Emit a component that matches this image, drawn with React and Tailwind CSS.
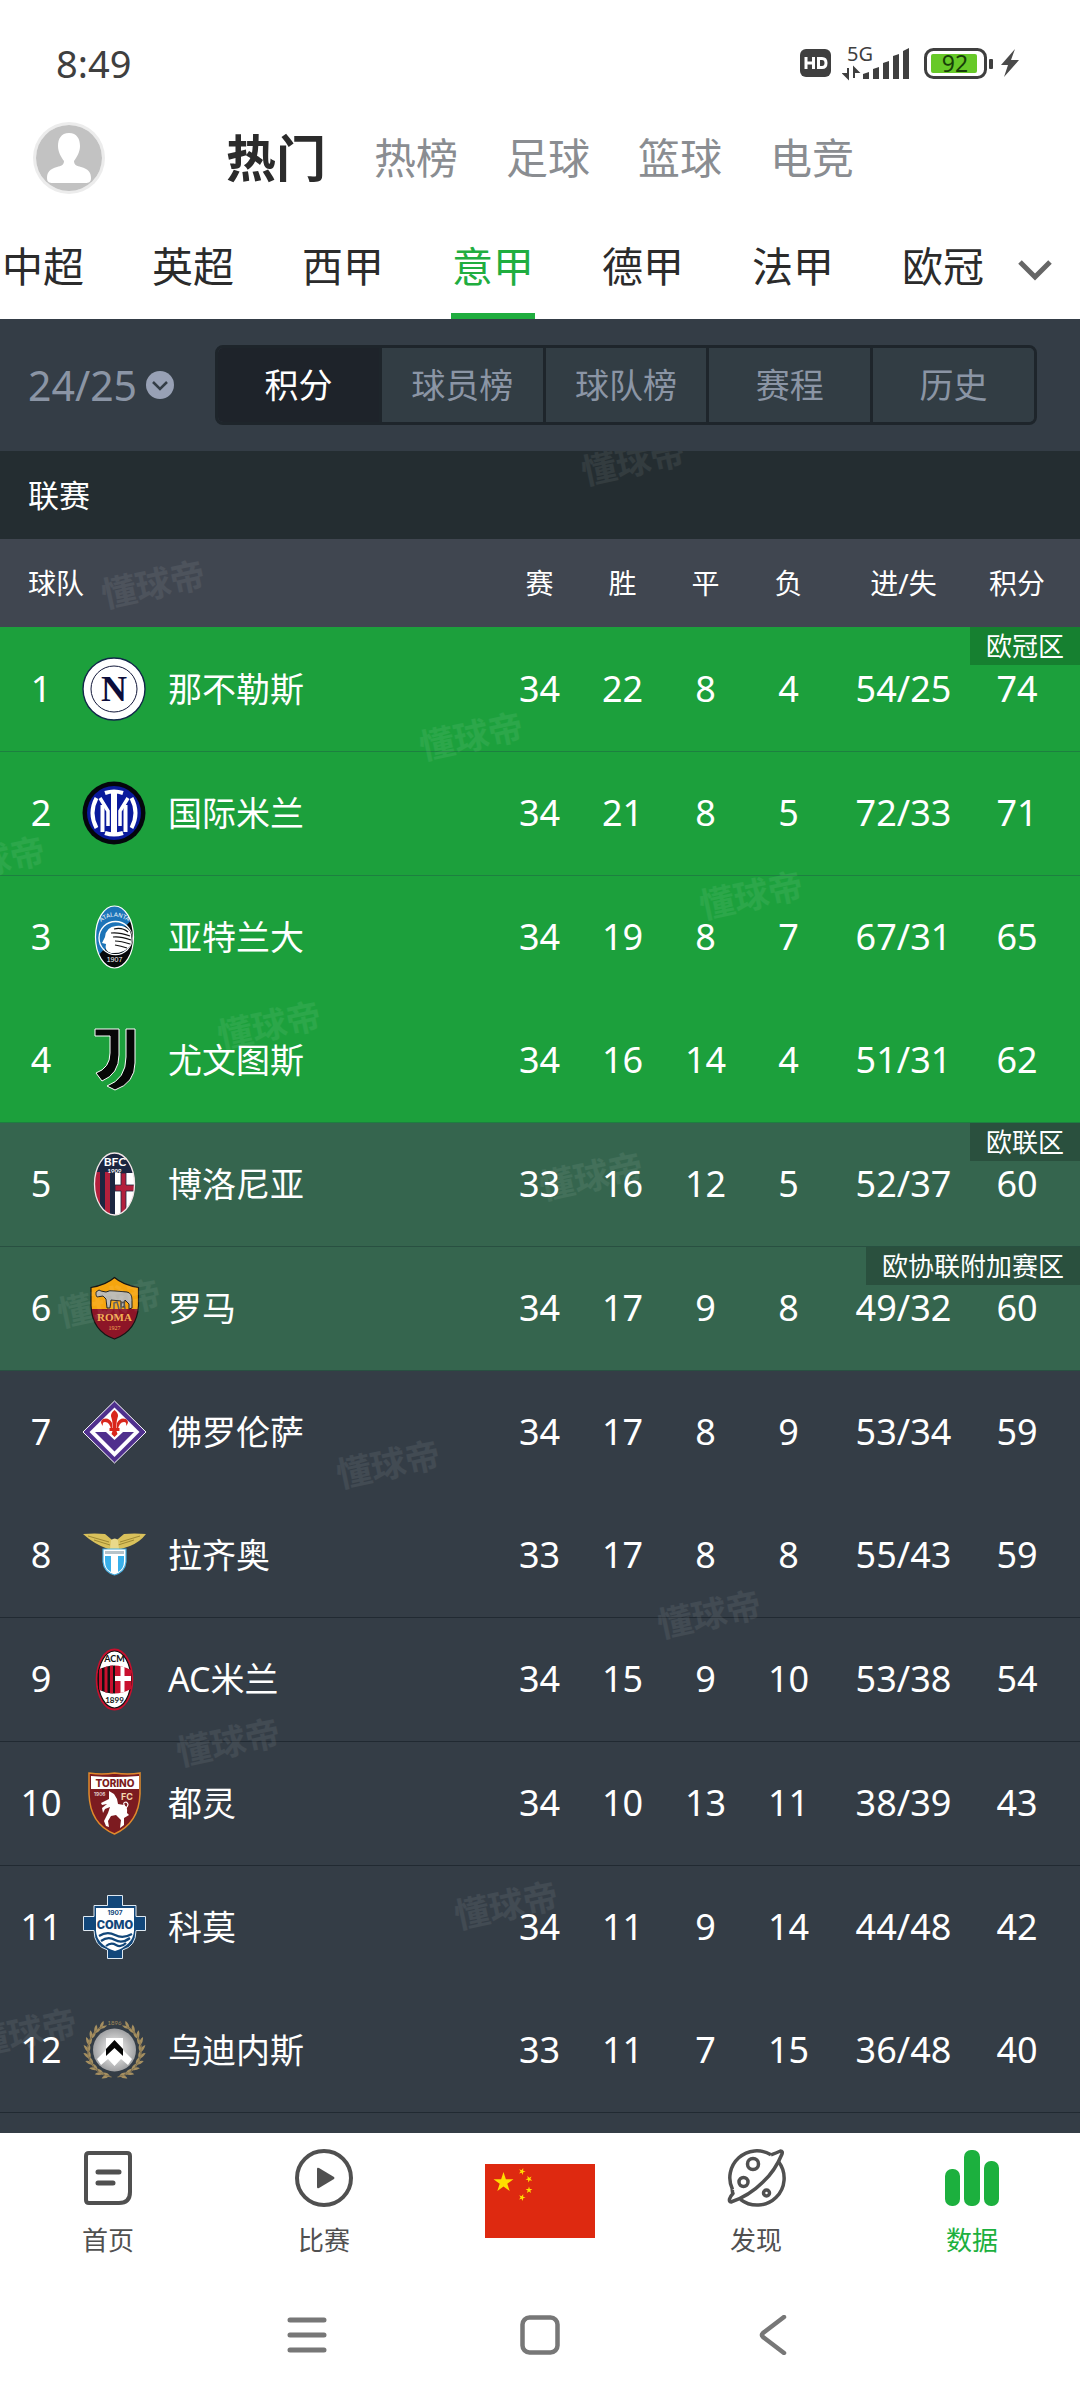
import { useState } from 'react'
import clsx from 'clsx'

const channels = ['热门', '热榜', '足球', '篮球', '电竞']
const leagues = ['中超', '英超', '西甲', '意甲', '德甲', '法甲', '欧冠']
const views = ['积分', '球员榜', '球队榜', '赛程', '历史']

const teams = [
  { name: '那不勒斯', crest: Napoli, zone: 'ucl', badge: '欧冠区', line: true, stats: [34, 22, 8, 4, '54/25', 74] },
  { name: '国际米兰', crest: Inter, zone: 'ucl', line: true, stats: [34, 21, 8, 5, '72/33', 71] },
  { name: '亚特兰大', crest: Atalanta, zone: 'ucl', stats: [34, 19, 8, 7, '67/31', 65] },
  { name: '尤文图斯', crest: Juventus, zone: 'ucl', line: true, stats: [34, 16, 14, 4, '51/31', 62] },
  { name: '博洛尼亚', crest: Bologna, zone: 'uel', badge: '欧联区', line: true, stats: [33, 16, 12, 5, '52/37', 60] },
  { name: '罗马', crest: Roma, zone: 'uel', badge: '欧协联附加赛区', line: true, stats: [34, 17, 9, 8, '49/32', 60] },
  { name: '佛罗伦萨', crest: Fiorentina, stats: [34, 17, 8, 9, '53/34', 59] },
  { name: '拉齐奥', crest: Lazio, line: true, stats: [33, 17, 8, 8, '55/43', 59] },
  { name: 'AC米兰', crest: Milan, line: true, stats: [34, 15, 9, 10, '53/38', 54] },
  { name: '都灵', crest: Torino, line: true, stats: [34, 10, 13, 11, '38/39', 43] },
  { name: '科莫', crest: Como, stats: [34, 11, 9, 14, '44/48', 42] },
  { name: '乌迪内斯', crest: Udinese, line: true, stats: [33, 11, 7, 15, '36/48', 40] },
]

// centre points, measured from the top left of the standings
const watermarks = [
  [633, 10], [153, 133], [471, 285], [-7, 409], [751, 444], [269, 574], [591, 725],
  [109, 852], [388, 1013], [709, 1163], [228, 1291], [506, 1454], [25, 1581],
]

function Crest({ children }) {
  return (
    <svg viewBox="0 0 64 64" className="block size-16" aria-hidden="true">
      {children}
    </svg>
  )
}

function Napoli() {
  return (
    <Crest>
      <circle cx="32" cy="32" r="31" fill="#fff" stroke="#12284a" strokeWidth="1.4" />
      <circle cx="32" cy="32" r="23" fill="none" stroke="#12183a" strokeWidth="1" />
      <text x="32" y="44" fontSize="36" fontWeight="700" textAnchor="middle" fill="#0c0d3a" fontFamily="Liberation Serif, serif">N</text>
    </Crest>
  )
}

function Inter() {
  return (
    <Crest>
      <circle cx="32" cy="32" r="31.5" fill="#04060c" />
      <circle cx="32" cy="32" r="27" fill="#0a1a9c" />
      <g fill="none" stroke="#fff">
        <path d="M23 12q9-3 18 0M23 52q9 3 18 0" strokeWidth="4" />
        <path d="M32 11v42" strokeWidth="6" />
        <path d="M14.5 17q-8 15 0 30M49.5 17q8 15 0 30" strokeWidth="4" />
        <path d="M18 17l8 13v15M46 17l-8 13v15" strokeWidth="3.5" />
        <path d="M20.5 24v27M43.5 24v27" strokeWidth="4" />
      </g>
    </Crest>
  )
}

function Atalanta() {
  return (
    <Crest>
      <clipPath id="ata"><ellipse cx="32.5" cy="32" rx="19" ry="31" /></clipPath>
      <g clipPath="url(#ata)">
        <rect width="64" height="64" fill="#1c74b8" />
        <path d="M54 10L12 55v9h44z" fill="#07080a" />
      </g>
      <circle cx="33.5" cy="33" r="16.5" fill="#1c74b8" stroke="#fff" strokeWidth="1.3" />
      <path d="M50 32a16.5 16.5 0 0 1-27 13l20-24q7 4 7 11z" fill="#07080a" />
      <path d="M29 48q-7-2-5-9l-4-1 3-6q1-10 11-11 9-1 14 5 3 8 0 15-6 8-19 7z" fill="#fff" />
      <path d="M32 24q8-2 14 3M29 28q8-1 19 3M31 32q7-1 18 3M33 36q6 0 15 3M33 40q6 1 12 3" fill="none" stroke="#111" strokeWidth="1.2" />
      <ellipse cx="32.5" cy="32" rx="19" ry="31" fill="none" stroke="#fff" strokeWidth="1.2" />
      <path id="ataArc" d="M19 17Q32 6 47 17" fill="none" />
      <text fontSize="6" fill="#fff" fontFamily="Liberation Sans, sans-serif"><textPath href="#ataArc">ATALANTA</textPath></text>
      <text x="32.5" y="57" fontSize="7" textAnchor="middle" fill="#fff" fontFamily="Liberation Sans, sans-serif">1907</text>
    </Crest>
  )
}

function Juventus() {
  return (
    <Crest>
      <g fill="#060606" stroke="#fff" strokeWidth="1">
        <path d="M13 1h24v26q0 19-17 26l-6-8q14-5 14-20V8H13z" />
        <path d="M44 1h9v34q0 20-20 27l-8-4q19-7 19-29z" />
      </g>
    </Crest>
  )
}

function Bologna() {
  return (
    <Crest>
      <clipPath id="bol"><ellipse cx="32.5" cy="32" rx="20" ry="31" /></clipPath>
      <g clipPath="url(#bol)">
        <rect width="64" height="64" fill="#1b2640" />
        <path d="M12 20h6v44h-6zM23 20h5v44h-5z" fill="#b3203c" />
        <path d="M33 21h20v43H33z" fill="#fff" />
        <path d="M39 21h5v12h10v6H44v25h-5V39h-6v-6h6z" fill="#b3203c" stroke="#1b2640" strokeWidth="0.8" />
      </g>
      <ellipse cx="32.5" cy="32" rx="20" ry="31" fill="none" stroke="#f3e6e8" strokeWidth="1.3" />
      <text x="33" y="14" fontSize="12" fontWeight="700" textAnchor="middle" fill="#fff" fontFamily="Lato, sans-serif">BFC</text>
      <text x="32.5" y="20.5" fontSize="6" fontWeight="700" textAnchor="middle" fill="#fff" fontFamily="Lato, sans-serif">1909</text>
    </Crest>
  )
}

function Roma() {
  const shield = 'M32.5 1.5Q24 9 9 11.5v18q1 26 23.5 33.5Q55 55 56.5 29.5v-18Q41 9 32.5 1.5z'
  return (
    <Crest>
      <clipPath id="rom"><path d={shield} /></clipPath>
      <g clipPath="url(#rom)">
        <rect width="64" height="33" fill="#f6a50e" />
        <rect y="33" width="64" height="31" fill="#8d1527" />
      </g>
      <path d={shield} fill="none" stroke="#151515" strokeWidth="1.2" />
      <path d="M14 16l3-2 2 1 5 1q3-2 9-1l12 1q5 1 5 8v8l-3 1v-5l-4-4-1 7h-3v-6l-10-1-1 8h-3l-1-9-3-3-6 1-1-2z" fill="#b9b7b2" stroke="#222" strokeWidth="1" />
      <path d="M32 33v-6l3-1 2 7M39 33v-6l3-1 1 7" fill="none" stroke="#555" strokeWidth="1.5" />
      <text x="32.5" y="45" fontSize="11" fontWeight="700" textAnchor="middle" fill="#f3b053" fontFamily="Liberation Serif, serif">ROMA</text>
      <text x="32.5" y="54" fontSize="6" textAnchor="middle" fill="#f3b053" fontFamily="Liberation Serif, serif">1927</text>
    </Crest>
  )
}

function Fiorentina() {
  return (
    <Crest>
      <path d="M32.5 1L64 32 32.5 63 1 32z" fill="#4f2f8d" stroke="#fff" strokeWidth="1" />
      <path d="M32.5 7.5L57.5 32 32.5 57 7.5 32z" fill="#fff" />
      <path d="M13 32h11l8.5 8 8.5-8h11L32.5 51.5z" fill="#4f2f8d" />
      <g fill="#d9261c">
        <path d="M32.5 10q5 4 3 8-1 3-1 6v4h3v3h-3l1 3-3 3-3-3 1-3h-3v-3h3v-4q0-3-1-6-2-4 3-8z" />
        <path d="M29 30q-1-8-6-8-3 0-2 4-4-4 0-7 6-2 9 4v7zM36 30q1-8 6-8 3 0 2 4 4-4 0-7-6-2-9 4v7z" />
      </g>
    </Crest>
  )
}

function Lazio() {
  return (
    <Crest>
      <path d="M1 11q12-1 22 0l6 5 3 3 4-3 6-5q10-1 22 0-6 8-16 12l-9 3H26q-14-5-25-15z" fill="#d9c15b" />
      <path d="M6 13l21 6M12 17l16 5M58 13l-20 6M52 17l-16 5" stroke="#8e7a28" strokeWidth="0.8" />
      <path d="M29 17q4-3 7 0l1 9h-9z" fill="#e9d98a" />
      <path d="M21 26h23v13q-1 10-11.5 13Q22 49 21 39z" fill="#fff" stroke="#46aee0" strokeWidth="1.2" />
      <path d="M23 33h6v16q-6-3-6-11zM36 33h6v5q0 8-6 11z" fill="#39b0ea" />
      <rect x="23" y="28" width="19" height="3" fill="#b6c3c9" />
    </Crest>
  )
}

function Milan() {
  return (
    <Crest>
      <ellipse cx="32.5" cy="32.5" rx="18.8" ry="31" fill="#c8102e" />
      <ellipse cx="32.5" cy="32.5" rx="16.5" ry="28.5" fill="#fff" stroke="#111" strokeWidth="1.2" />
      <clipPath id="mil"><path d="M16 23q16-9 33 0v19q-17 9-33 0z" /></clipPath>
      <g clipPath="url(#mil)">
        <rect x="16" y="17" width="17" height="32" fill="#111" />
        <path d="M17 17h3v32h-3zM22.5 17h3v32h-3zM28 17h3v32h-3z" fill="#c8102e" />
        <rect x="33" y="17" width="16" height="32" fill="#c8102e" />
        <path d="M38.5 17h4v12H49v5h-6.5v15h-4V34H33v-5h5.5z" fill="#fff" />
      </g>
      <text x="32.5" y="15" fontSize="9" fontWeight="700" textAnchor="middle" fill="#111" fontFamily="Lato, sans-serif">ACM</text>
      <text x="32.5" y="56" fontSize="8" fontWeight="700" textAnchor="middle" fill="#111" fontFamily="Lato, sans-serif">1899</text>
    </Crest>
  )
}

function Torino() {
  return (
    <Crest>
      <path d="M7 2q13 2 25.5 0Q46 4 58 2v21q-1 29-25.5 40Q8 53 7 23z" fill="#7c1b20" stroke="#e08a2c" strokeWidth="1.5" />
      <path d="M9 5q23 2 48 0v13H9z" fill="#fff" />
      <text x="33" y="15.5" fontSize="10" fontWeight="800" textAnchor="middle" fill="#7c1b20" fontFamily="Inter, sans-serif">TORINO</text>
      <text x="12" y="25" fontSize="5" fill="#fff" fontFamily="Inter, sans-serif">1906</text>
      <text x="39" y="28.5" fontSize="9" fontWeight="700" fill="#f2d9b0" fontFamily="Inter, sans-serif">FC</text>
      <path d="M27 20l5 3 3 5 1 5 6 1q4 2 3 8l2 2-5 3v7l-4 3 1-8-5-5-5 1-3 5 1 6-3-1-2-5 4-8 2-6-5 2-2 4-1-5 5-4-5 1-1-2 8-4z" fill="#fff" />
      <path d="M43 36q-3-5 1-5 4 2 0 6" fill="none" stroke="#fff" strokeWidth="1.2" />
    </Crest>
  )
}

function Como() {
  return (
    <Crest>
      <path d="M25.5.5h15v10H54v11h9.500v14H54q0 16-13.5 19.5v8.500h-15V55Q12 51 12 35.500H1.500v-14H12v-11h13.500z" fill="#12477a" stroke="#dfe9f1" strokeWidth="1" />
      <path d="M14 13h38v23q-1 14-19 20-18-6-19-20z" fill="#fff" />
      <text x="33" y="19.5" fontSize="6.5" fontWeight="700" textAnchor="middle" fill="#12477a" fontFamily="Inter, sans-serif">1907</text>
      <text x="33" y="34" fontSize="12.5" fontWeight="900" textAnchor="middle" fill="#12477a" fontFamily="Roboto, sans-serif">COMO</text>
      <path d="M17 41q8-5 16-1t17-1M19 46q7-5 14-1t15-2M24 51q5-4 10-1t10-2" fill="none" stroke="#12477a" strokeWidth="2.2" />
    </Crest>
  )
}

function Laurel({ side }) {
  const leaves = [28, 43, 58, 73, 88, 103, 118, 133, 148, 163]
  return (
    <g transform={`translate(32.5 32) scale(${side} 1)`}>
      {leaves.map((deg) => (
        <g key={deg} transform={`rotate(${deg})`}>
          <path d="M3-26q-2-4-7-5 1 5 7 5zM3-26q-3 3-8 1 4-3 8-1z" />
        </g>
      ))}
      <path d="M12-24A27 27 0 0 1 3 27" fill="none" stroke="#9a8355" strokeWidth="1" />
    </g>
  )
}

function Udinese() {
  return (
    <Crest>
      <radialGradient id="udi">
        <stop offset="0.4" stopColor="#d9d9d9" />
        <stop offset="1" stopColor="#9fa0a2" />
      </radialGradient>
      <g fill="#a58f60">
        <Laurel side={1} />
        <Laurel side={-1} />
      </g>
      <text x="32.5" y="7" fontSize="6" textAnchor="middle" fill="#a08a5c" fontFamily="Lato, sans-serif">1896</text>
      <circle cx="32.5" cy="32" r="21.5" fill="url(#udi)" />
      <path d="M24 20h17v12l9 9-4 6-7-6-6.5 7-6.5-7-7 6-4-6 9-9z" fill="#fff" />
      <path d="M32.5 22L41 31v7l-8.5-8-8.5 8v-7z" fill="#050505" />
    </Crest>
  )
}

function StatusBar() {
  return (
    <div className="flex h-[116px] items-center justify-between pt-2.5 pr-[60px] pl-14 text-[#3f3f3f]">
      <span className="text-[38px] leading-none">8:49</span>
      <div className="flex items-center">
        <svg viewBox="0 0 32 30" className="h-[30px] w-8" aria-label="HD">
          <rect y="1" width="31" height="28" rx="6" fill="#3f3f3f" />
          <path d="M6 9v12M13.5 9v12M6 15h7.5" stroke="#fff" strokeWidth="3" fill="none" />
          <path d="M18.5 10.5h3.5q4 0 4 4.5t-4 4.5h-3.5z" stroke="#fff" strokeWidth="3" fill="none" />
        </svg>
        <svg viewBox="0 0 70 44" className="ml-2.5 h-11 w-[70px]" aria-hidden="true">
          <text x="5" y="20" fontSize="20" fill="#3f3f3f" fontFamily="Noto Sans, sans-serif">5G</text>
          <path d="M6 27v10l-4-4h4M12 37V27l4 4h-4" fill="#3f3f3f" stroke="#3f3f3f" strokeWidth="2" />
          <path d="M21 33l6-2v7h-6zM31 28l6-2v12h-6zM41 22l6-2v18h-6zM51 15l6-2v25h-6zM61 10l6-3v31h-6z" fill="#3f3f3f" />
        </svg>
        <svg viewBox="0 0 72 34" className="ml-3 h-[34px] w-[72px]" aria-hidden="true">
          <rect x="1.5" y="3.5" width="60" height="28" rx="8" fill="#fff" stroke="#3f3f3f" strokeWidth="3" />
          <rect x="7" y="8" width="46" height="19" rx="2" fill="#67c928" />
          <rect x="65" y="13" width="4" height="10" rx="1" fill="#3f3f3f" />
          <text x="31" y="26" fontSize="23" textAnchor="middle" fill="#173e08" fontFamily="Noto Sans, sans-serif">92</text>
        </svg>
        <svg viewBox="0 0 20 30" className="ml-1 h-[30px] w-5" aria-hidden="true">
          <path d="M15 1L1 17h7L4 29l15-17h-8z" fill="#4a4a4a" />
        </svg>
      </div>
    </div>
  )
}

function ChannelBar() {
  const [active, setActive] = useState('热门')
  return (
    <header className="flex h-[84px] items-center pl-9">
      <button type="button" aria-label="我的" className="rounded-full ring-3 ring-[#ececec]">
        <svg viewBox="0 0 66 66" className="block size-[66px]">
          <circle cx="33" cy="33" r="33" fill="#c2c2c2" />
          <path d="M33 8c8 0 11 6 11 13 0 6-3 11-6 15 0 4 3 5 7 6 7 2 10 5 10 11 0 4-2 5-6 5H17c-4 0-6-1-6-5 0-6 3-9 10-11 4-1 7-2 7-6-3-4-6-9-6-15 0-7 3-13 11-13z" fill="#fff" />
        </svg>
      </button>
      <nav className="ml-[124px] flex items-center gap-12">
        {channels.map((item) => (
          <button
            key={item}
            type="button"
            onClick={() => setActive(item)}
            className={clsx('leading-none', item === active ? 'text-[50px] font-bold text-[#2b2b2b]' : 'text-[42px] text-[#8a8d91]')}
          >
            {item}
          </button>
        ))}
      </nav>
    </header>
  )
}

function LeagueTabs() {
  const [active, setActive] = useState('意甲')
  return (
    <div className="flex h-[119px]">
      <nav className="flex flex-1 justify-end overflow-hidden">
        {leagues.map((item) => (
          <button
            key={item}
            type="button"
            onClick={() => setActive(item)}
            className={clsx(
              'relative flex w-[150px] shrink-0 items-center justify-center pt-3.5 text-[41px] leading-none',
              item === active ? 'text-[#20ad3f]' : 'text-[#2b2b2b]',
            )}
          >
            {item}
            {item === active && <span className="absolute bottom-0 h-1.5 w-[84px] bg-[#20ad3f]" />}
          </button>
        ))}
      </nav>
      <button type="button" aria-label="更多联赛" className="flex w-[62px] items-center pt-5">
        <svg viewBox="0 0 34 22" className="h-[22px] w-[34px]">
          <path d="M2 3l15 15L32 3" fill="none" stroke="#666" strokeWidth="5" />
        </svg>
      </button>
    </div>
  )
}

function FilterBar() {
  const [active, setActive] = useState('积分')
  return (
    <div className="flex h-[132px] items-center bg-[#343d46] pr-[43px]">
      <label className="flex w-[215px] shrink-0 items-center gap-2 pl-7 text-[#8b95a5]">
        <select aria-label="赛季" className="appearance-none bg-transparent text-[41px] leading-none outline-none" defaultValue="24/25">
          <option>24/25</option>
        </select>
        <svg viewBox="0 0 28 28" className="size-7 shrink-0">
          <circle cx="14" cy="14" r="14" fill="#98a1b5" />
          <path d="M7 11l7 7 7-7" fill="none" stroke="#343d46" strokeWidth="2.5" />
        </svg>
      </label>
      <div className="flex h-20 flex-1 divide-x-[3px] divide-[#1e252b] overflow-hidden rounded-lg border-[3px] border-[#1e252b]">
        {views.map((item) => (
          <button
            key={item}
            type="button"
            onClick={() => setActive(item)}
            className={clsx('flex-1 text-[34px] leading-none', item === active ? 'bg-[#1e232a] text-white' : 'bg-[#323d44] text-[#8b95a5]')}
          >
            {item}
          </button>
        ))}
      </div>
    </div>
  )
}

function TeamRow({ rank, team }) {
  const { name, crest: Logo, zone, badge, line, stats } = team
  return (
    <tr
      className={clsx(
        line ? 'h-[124px] border-b' : 'h-[123px]',
        zone === 'ucl' && 'border-[#1c8040] bg-[#1ca03c]',
        zone === 'uel' && 'border-[#285041] bg-[#35654e]',
        !zone && 'border-[#212a32] bg-[#343d46]',
      )}
    >
      <td>{rank}</td>
      <td><Logo /></td>
      <th scope="row" className="pl-[22px] text-left text-[34px] font-normal">{name}</th>
      {stats.map((value, i) => (
        <td key={i} className={clsx(i === 5 && 'relative pr-[23px]')}>
          {value}
          {i === 5 && badge && (
            <span className="absolute top-0 right-0 h-[38px] bg-black/20 px-4 text-[26px] leading-[38px] whitespace-nowrap">{badge}</span>
          )}
        </td>
      ))}
    </tr>
  )
}

function Standings() {
  return (
    <main className="relative overflow-hidden bg-[#343d46] pb-5 text-white">
      <h2 className="flex h-[88px] items-center bg-[#242d31] pl-7 text-[31px] leading-none">联赛</h2>
      <table className="w-full table-fixed border-collapse text-center text-[36px] leading-none">
        <colgroup>
          <col className="w-[82px]" />
          <col className="w-16" />
          <col />
          <col className="w-[83px]" />
          <col className="w-[83px]" />
          <col className="w-[83px]" />
          <col className="w-[83px]" />
          <col className="w-[147px]" />
          <col className="w-[103px]" />
        </colgroup>
        <thead>
          <tr className="h-[88px] bg-[#404650] text-[28px] *:font-normal">
            <th colSpan={3} className="pl-7 text-left">球队</th>
            <th>赛</th>
            <th>胜</th>
            <th>平</th>
            <th>负</th>
            <th>进/失</th>
            <th className="pr-[23px]">积分</th>
          </tr>
        </thead>
        <tbody>
          {teams.map((team, i) => (
            <TeamRow key={team.name} rank={i + 1} team={team} />
          ))}
        </tbody>
      </table>
      <div className="pointer-events-none absolute inset-0" aria-hidden="true">
        {watermarks.map(([x, y]) => (
          <span
            key={y}
            style={{ left: x, top: y }}
            className="absolute -translate-x-1/2 -translate-y-1/2 -rotate-12 text-[35px] leading-none font-bold whitespace-nowrap text-white/7"
          >
            懂球帝
          </span>
        ))}
      </div>
    </main>
  )
}

function HomeIcon() {
  return (
    <svg viewBox="0 0 58 58" className="size-[58px]" fill="none" stroke="#505050" strokeWidth="4" strokeLinecap="round">
      <path d="M10 4h38q3 0 3 3v36q0 11-11 11H10q-3 0-3-3V7q0-3 3-3z" />
      <path d="M19 23h21M19 34h15" strokeWidth="5" />
    </svg>
  )
}

function MatchIcon() {
  return (
    <svg viewBox="0 0 58 58" className="size-[58px]">
      <circle cx="29" cy="29" r="27" fill="none" stroke="#505050" strokeWidth="4" />
      <path d="M22 20q0-2 2-1l15 9q1 1 0 2l-15 9q-2 1-2-1z" fill="#505050" />
    </svg>
  )
}

function DiscoverIcon() {
  return (
    <svg viewBox="0 0 58 58" className="size-[58px] overflow-visible" fill="none" stroke="#505050" strokeWidth="3.5" strokeLinejoin="round">
      <path d="M44 5.800Q49 4 53.500 2q2.500 0 1.500 3Q48 22 36 33 22 47 4 53q-2 0-1.500-3 1-3 3.500-5.500-1-2-.5-4" />
      <path d="M5.500 40.500A27 27 0 0 1 44 5.800" />
      <path d="M51.800 13A27 27 0 0 1 13.400 50.300" />
      <circle cx="26" cy="15" r="5.5" />
      <circle cx="16.500" cy="33" r="4.5" />
      <circle cx="39.5" cy="44" r="3" />
    </svg>
  )
}

function DataIcon() {
  return (
    <svg viewBox="0 0 58 58" className="size-[58px]" fill="#1cb03e">
      <rect x="2" y="20" width="15" height="37" rx="7" />
      <rect x="21" y="1" width="16" height="56" rx="7" />
      <rect x="41" y="12" width="15" height="45" rx="7" />
    </svg>
  )
}

function Star({ x, y, r, turn = 0 }) {
  return (
    <path
      d="M0-1L.225-.309.951-.309.363.118.588.809 0 .382-.588.809-.363.118-.951-.309-.225-.309z"
      transform={`translate(${x} ${y}) rotate(${turn}) scale(${r})`}
      fill="#ffde00"
    />
  )
}

function FlagIcon() {
  return (
    <svg viewBox="0 0 110 74" className="h-[74px] w-[110px]">
      <rect width="110" height="74" fill="#de2910" />
      <Star x={18.5} y={18.5} r={10.5} />
      <Star x={37} y={7.5} r={3.6} turn={20} />
      <Star x={44} y={15} r={3.6} turn={45} />
      <Star x={44} y={26} r={3.6} />
      <Star x={37} y={33.5} r={3.6} turn={20} />
    </svg>
  )
}

function BottomNav() {
  const items = [
    { label: '首页', icon: HomeIcon },
    { label: '比赛', icon: MatchIcon },
    { icon: FlagIcon },
    { label: '发现', icon: DiscoverIcon },
    { label: '数据', icon: DataIcon, active: true },
  ]
  return (
    <nav className="grid h-[137px] grid-cols-5">
      {items.map(({ label, icon: Icon, active }, i) => (
        <a
          key={i}
          href="#"
          aria-label={label ?? '中国'}
          className={clsx('flex flex-col items-center text-[26px] leading-none', label ? 'gap-5 pt-4' : 'pt-[31px]', active ? 'text-[#1cb03e]' : 'text-[#505050]')}
        >
          <Icon />
          {label && <span>{label}</span>}
        </a>
      ))}
    </nav>
  )
}

function SystemNav() {
  return (
    <div className="grid h-[130px] grid-cols-3 items-center justify-items-center px-[190px] *:size-10">
      <button type="button" aria-label="最近任务">
        <svg viewBox="0 0 40 40"><path d="M3 5h34M3 20h34M3 35h34" stroke="#777" strokeWidth="5" strokeLinecap="round" /></svg>
      </button>
      <button type="button" aria-label="主屏幕">
        <svg viewBox="0 0 40 40"><rect x="2.5" y="2.5" width="35" height="35" rx="7" fill="none" stroke="#777" strokeWidth="4.5" /></svg>
      </button>
      <button type="button" aria-label="返回">
        <svg viewBox="0 0 40 40"><path d="M31 2L10 18q-2 2 0 4l21 16" fill="none" stroke="#777" strokeWidth="4.5" strokeLinecap="round" /></svg>
      </button>
    </div>
  )
}

export default function App() {
  return (
    <div className="min-h-screen bg-white font-['Noto_Sans','Noto_Sans_CJK_SC',sans-serif]">
      <StatusBar />
      <ChannelBar />
      <LeagueTabs />
      <FilterBar />
      <Standings />
      <BottomNav />
      <SystemNav />
    </div>
  )
}
